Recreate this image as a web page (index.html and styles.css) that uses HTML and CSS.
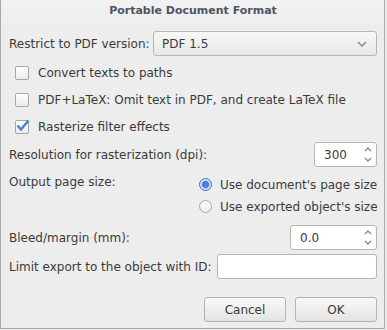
FILE: index.html
```html
<!DOCTYPE html>
<html lang="en">
<head>
    <meta charset="UTF-8">
    <title>Portable Document Format</title>
    <link rel="stylesheet" href="styles.css">
</head>
<body>
    <div class="dialog">
        <div class="title">Portable Document Format</div>
        <div class="row version-row">
            <span class="label">Restrict to PDF version:</span>
            <div class="combo">
                <span>PDF 1.5</span>
                <svg width="10" height="6" viewBox="0 0 10 6"><path d="M1 1 L5 5 L9 1" fill="none" stroke="#8a8a8a" stroke-width="1.5"/></svg>
            </div>
        </div>
        <label class="check-row">
            <span class="check"></span>
            <span>Convert texts to paths</span>
        </label>
        <label class="check-row">
            <span class="check"></span>
            <span>PDF+LaTeX: Omit text in PDF, and create LaTeX file</span>
        </label>
        <label class="check-row">
            <span class="check checked">
                <svg width="15" height="13" viewBox="0 0 15 13"><path d="M2.5 6.5 L6 10.5 L13.5 1.5" fill="none" stroke="#4a7fd0" stroke-width="2.4"/></svg>
            </span>
            <span>Rasterize filter effects</span>
        </label>
        <div class="row res-row">
            <span class="label">Resolution for rasterization (dpi):</span>
            <div class="spin res-spin">
                <span>300</span>
                <div class="arrows">
                    <svg width="8" height="5" viewBox="0 0 8 5"><path d="M1 4 L4 1 L7 4" fill="none" stroke="#8a8a8a" stroke-width="1.3"/></svg>
                    <svg width="8" height="5" viewBox="0 0 8 5"><path d="M1 1 L4 4 L7 1" fill="none" stroke="#8a8a8a" stroke-width="1.3"/></svg>
                </div>
            </div>
        </div>
        <div class="page-size">
            <span class="label">Output page size:</span>
            <div class="radios">
                <div class="radio-row">
                    <span class="radio on"></span>
                    <span>Use document's page size</span>
                </div>
                <div class="radio-row">
                    <span class="radio"></span>
                    <span>Use exported object's size</span>
                </div>
            </div>
        </div>
        <div class="row bleed-row">
            <span class="label">Bleed/margin (mm):</span>
            <div class="spin bleed-spin">
                <span>0.0</span>
                <div class="arrows">
                    <svg width="8" height="5" viewBox="0 0 8 5"><path d="M1 4 L4 1 L7 4" fill="none" stroke="#8a8a8a" stroke-width="1.3"/></svg>
                    <svg width="8" height="5" viewBox="0 0 8 5"><path d="M1 1 L4 4 L7 1" fill="none" stroke="#8a8a8a" stroke-width="1.3"/></svg>
                </div>
            </div>
        </div>
        <div class="row id-row">
            <span class="label">Limit export to the object with ID:</span>
            <div class="entry"></div>
        </div>
        <div class="buttons">
            <button class="btn">Cancel</button>
            <button class="btn">OK</button>
        </div>
    </div>
</body>
</html>
```

FILE: styles.css
```css
html, body {
    margin: 0;
    padding: 0;
    background-color: #ededed;
}

body {
    font-family: 'DejaVu Sans', sans-serif;
    font-size: 12px;
    color: #3a3a3a;
}

.dialog {
    width: 385px;
    height: 329px;
    box-sizing: border-box;
    border-left: 1px solid #a9a9a9;
    border-right: 1px solid #a9a9a9;
    border-bottom: 1px solid #a9a9a9;
    background: linear-gradient(#f2f2f2, #ededed 28px);
    padding: 0 7px 0 8px;
}

.title {
    text-align: center;
    font-weight: bold;
    font-size: 11px;
    color: #4d5562;
    height: 22px;
    line-height: 22px;
}

.row {
    display: flex;
    align-items: center;
    justify-content: space-between;
}

.label {
    white-space: nowrap;
}

.version-row {
    margin-top: 9px;
}

.combo {
    width: 224px;
    height: 25px;
    box-sizing: border-box;
    border: 1px solid #b6b6b3;
    border-radius: 3px;
    background: linear-gradient(#f7f7f7, #e8e8e7);
    display: flex;
    align-items: center;
    justify-content: space-between;
    padding: 0 9px 0 8px;
}

.check-row {
    display: flex;
    align-items: center;
    gap: 9px;
    height: 15px;
    padding-left: 6px;
    margin-top: 9px;
}

.version-row + .check-row {
    margin-top: 9px;
}

.check-row + .check-row {
    margin-top: 12px;
}

.check {
    width: 12px;
    height: 12px;
    border: 1px solid #a7a7a5;
    border-radius: 2px;
    background: linear-gradient(#fdfdfd, #ececec);
    position: relative;
    flex: none;
}

.check.checked svg {
    position: absolute;
    left: -1px;
    top: -2px;
}

.res-row {
    margin-top: 8px;
}

.spin {
    height: 25px;
    box-sizing: border-box;
    border: 1px solid #b6b6b3;
    border-radius: 3px;
    background: #fff;
    display: flex;
    align-items: center;
    justify-content: space-between;
    padding: 0 4px 0 9px;
}

.res-spin {
    width: 63px;
}

.bleed-spin {
    width: 87px;
}

.arrows {
    display: flex;
    flex-direction: column;
    gap: 5px;
}

.arrows svg {
    display: block;
}

.page-size {
    display: flex;
    justify-content: space-between;
    margin-top: 8px;
}

.radios {
    display: flex;
    flex-direction: column;
    gap: 7px;
    padding-top: 2px;
    width: 178px;
    white-space: nowrap;
}

.radio-row {
    display: flex;
    align-items: center;
    gap: 8px;
    height: 15px;
}

.radio {
    width: 11px;
    height: 11px;
    border: 1px solid #a7a7a5;
    border-radius: 50%;
    background: linear-gradient(#fdfdfd, #ececec);
    flex: none;
}

.radio.on {
    border-color: #3d6fb5;
    background: radial-gradient(circle, #4d8ee0 0, #3c7ad1 3px, #bdd3f0 4px, #e9f0fa 6px);
}

.bleed-row {
    margin-top: 11px;
}

.id-row {
    margin-top: 4px;
}

.entry {
    width: 160px;
    height: 25px;
    box-sizing: border-box;
    border: 1px solid #b6b6b3;
    border-radius: 3px;
    background: #fff;
}

.buttons {
    display: flex;
    justify-content: flex-end;
    gap: 9px;
    margin-top: 18px;
}

.btn {
    width: 82px;
    height: 25px;
    font-family: 'DejaVu Sans', sans-serif;
    font-size: 12px;
    color: #3a3a3a;
    border: 1px solid #b3b3b0;
    border-radius: 3px;
    background: linear-gradient(#f8f8f8, #e4e4e3);
    padding: 0;
}
```
